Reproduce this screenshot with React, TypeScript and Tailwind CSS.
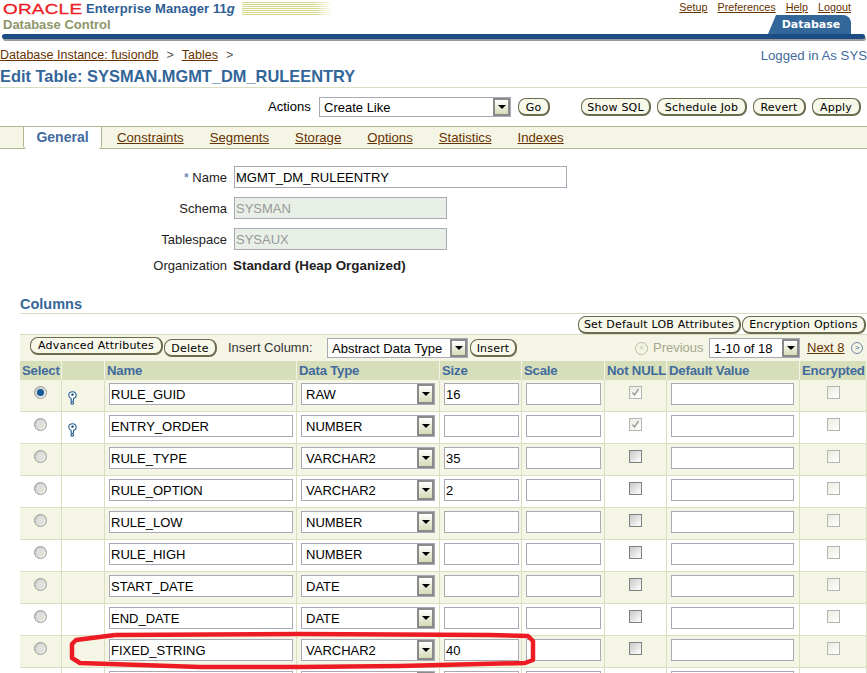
const sans = "font-['Liberation_Sans',Arial,sans-serif]"

const rows = [
  { name: 'RULE_GUID', type: 'RAW', size: '16', key: true, selected: true },
  { name: 'ENTRY_ORDER', type: 'NUMBER', size: '', key: true },
  { name: 'RULE_TYPE', type: 'VARCHAR2', size: '35' },
  { name: 'RULE_OPTION', type: 'VARCHAR2', size: '2' },
  { name: 'RULE_LOW', type: 'NUMBER', size: '' },
  { name: 'RULE_HIGH', type: 'NUMBER', size: '' },
  { name: 'START_DATE', type: 'DATE', size: '' },
  { name: 'END_DATE', type: 'DATE', size: '' },
  { name: 'FIXED_STRING', type: 'VARCHAR2', size: '40' },
  { name: '', type: '', size: '' },
]

function Btn({ children, className }: { children: React.ReactNode; className: string }) {
  return (
    <span className={`inline-flex h-[18px] shrink-0 items-center justify-center rounded-[8px] border border-b-2 border-r-2 border-[#6b6b4f] bg-[#f7f7ea] pt-[1px] font-['DejaVu_Sans',sans-serif] text-[11px] leading-none tracking-[0.2px] whitespace-nowrap text-black ${className}`}>
      {children}
    </span>
  )
}

function Arrow() {
  return (
    <span className="flex h-full w-[17px] shrink-0 items-center justify-center border-2 border-[#8a8a8a] bg-gradient-to-b from-white to-[#d5dcb8]">
      <span className="border-x-[4px] border-t-[4px] border-x-transparent border-t-black" />
    </span>
  )
}

function Select({ value, className, tall }: { value: string; className: string; tall?: boolean }) {
  return (
    <span className={`flex shrink-0 items-stretch border border-[#a9a9b5] bg-white ${className}`}>
      <span className={`flex-1 truncate pl-[4px] text-[13px] text-black ${tall ? 'leading-[21px]' : 'leading-[20px]'}`}>{value}</span>
      <Arrow />
    </span>
  )
}

function Field({ value, className, disabled }: { value?: string; className: string; disabled?: boolean }) {
  return (
    <span
      className={`block truncate border border-[#a9a9b5] pl-[1px] text-[13px] leading-[21px] ${
        disabled ? 'bg-[#e8efe6] text-[#999]' : 'bg-white text-black'
      } ${className}`}
    >
      {value}
    </span>
  )
}

function KeyIcon() {
  return (
    <svg width="9" height="14" viewBox="0 0 9 14" className="mt-[8px]">
      <path d="M4.5 0.8 C2 0.8 0.8 2.4 0.8 4.2 C0.8 5.8 2 7 3.2 7.6 L3.2 13 L5.4 13 L5.4 11.4 L4.4 10.6 L5.6 9.6 L5.4 7.6 C7 7 8.2 5.8 8.2 4.2 C8.2 2.4 7 0.8 4.5 0.8 Z" fill="#fff" stroke="#1f5f8f" strokeWidth="1.1" />
      <circle cx="4.5" cy="3.6" r="1.2" fill="#0b3c66" />
    </svg>
  )
}

function Radio({ on }: { on?: boolean }) {
  return (
    <span className="flex h-[13px] w-[13px] items-center justify-center rounded-full border border-[#9a9a9a] bg-gradient-to-br from-[#c4c4c4] to-[#f4f4f4]">
      <span className={`h-[7px] w-[7px] rounded-full ${on ? 'bg-[#135a96]' : 'bg-[#dfe2d6]'}`} />
    </span>
  )
}

function Check({ on, dark }: { on?: boolean; dark?: boolean }) {
  return (
    <span className={`flex h-[13px] w-[13px] items-center justify-center border bg-gradient-to-br ${dark ? 'border-[#808080] from-[#c8c8c8] to-white' : 'border-[#b4b4b4] from-[#e8ecdc] to-white'}`}>
      {on && (
        <svg width="9" height="9" viewBox="0 0 9 9">
          <path d="M1.5 4.5 L3.5 7 L7.5 1" fill="none" stroke="#a0a0a0" strokeWidth="1.5" />
        </svg>
      )}
    </span>
  )
}

const grid = 'grid grid-cols-[42px_43px_192px_143px_82px_83px_62px_133px_67px]'
const head = 'border-r border-[#f3f4e4] pl-[2px] text-[13.2px] font-bold leading-[19px] tracking-[-0.2px] text-[#426a9e] whitespace-nowrap'
const cell = 'flex h-[31px] items-start border-r border-[#dadfc0] pt-[3px]'
const tick = 'flex h-[31px] items-start justify-center border-r border-[#dadfc0] pt-[6px]'

export default function App() {
  return (
    <div className={`relative h-[673px] w-[867px] overflow-hidden bg-white ${sans}`}>
      {/* top branding */}
      <div className="flex h-[34px] justify-between">
        <div className="pl-[3px]">
          <div className="flex h-[18px] items-start">
            <span className="w-[80px] origin-left scale-x-[1.26] text-[15px] leading-[18px] tracking-[0.2px] text-[#ee1c25] [-webkit-text-stroke:0.3px_#ee1c25]">ORACLE</span>
            <span className="ml-[3px] w-[149px] text-[13px] font-bold leading-[18px] tracking-[0.1px] whitespace-nowrap text-[#2e5d94]">Enterprise Manager 11<i>g</i></span>
            <div className="ml-[7px] flex w-[91px] flex-col gap-[1px] pt-[2px]">
              {[0, 1, 2, 3, 4, 5, 6].map((i) => (
                <div key={i} className="h-[1px] bg-gradient-to-r from-[#d8d88c] via-[#d8d88c] via-[80%] to-white" />
              ))}
            </div>
          </div>
          <div className="text-[13px] font-bold leading-[14px] text-[#8f966a]">Database Control</div>
        </div>
        <div className="flex w-[120px] flex-col items-end pr-[16px]">
          <div className="flex gap-[10px] pt-[1px] text-[10.8px] leading-[13px] whitespace-nowrap text-[#663300] underline">
            <span>Setup</span>
            <span>Preferences</span>
            <span>Help</span>
            <span>Logout</span>
          </div>
          <div className="mt-[1px] flex h-[19px] w-[83px] shrink-0 items-center justify-center rounded-tr-[8px] bg-[#336699] pl-[3px] pt-[1px] font-['DejaVu_Sans',sans-serif] text-[11px] font-bold text-white [clip-path:polygon(8px_0,100%_0,100%_100%,0_100%)]">
            Database
          </div>
        </div>
      </div>
      <div className="mx-[2px] h-[5px] rounded-full bg-[#1c4c84] shadow-[1px_2px_0_#9a9a9a]" />

      {/* breadcrumb */}
      <div className="mt-[8px] flex h-[17px] items-center justify-between text-[12.5px] leading-none text-[#555]">
        <div className="flex items-center">
          <span className="text-[#663300] underline">Database Instance: fusiondb</span>
          <span className="ml-[8px]">&gt;</span>
          <span className="ml-[8px] text-[#663300] underline">Tables</span>
          <span className="ml-[8px]">&gt;</span>
        </div>
        <span className="text-[13.2px] text-[#426a9e]">Logged in As SYS</span>
      </div>
      <div className="h-[24px] border-b border-[#d9dcc0] pt-[2px] text-[16.4px] font-bold leading-[21px] text-[#336699]">Edit Table: SYSMAN.MGMT_DM_RULEENTRY</div>

      {/* actions */}
      <div className="mt-[9px] flex h-[20px] items-center pl-[268px] text-[13px]">
        <span className="w-[51px] shrink-0">Actions</span>
        <Select value="Create Like" className="h-[20px] w-[192px]" />
        <Btn className="ml-[7px] w-[32px]">Go</Btn>
        <Btn className="ml-[31px] w-[70px]">Show SQL</Btn>
        <Btn className="ml-[6px] w-[90px]">Schedule Job</Btn>
        <Btn className="ml-[6px] w-[53px]">Revert</Btn>
        <Btn className="ml-[6px] w-[49px]">Apply</Btn>
      </div>

      {/* sub tabs */}
      <div className="mt-[9px] flex h-[23px] border-y border-[#b3b68e] bg-[#f5f5e6] pl-[23px] text-[13.2px] text-[#663300]">
        <span className="relative -mb-[1px] flex w-[79px] items-center justify-center rounded-b-[4px] border-x border-[#b3b68e] bg-white pb-[1px] text-[14px] font-bold text-[#426a9e]">General</span>
        <div className="flex items-center pl-[15px] underline [&>span]:mr-[26px]">
          <span>Constraints</span>
          <span>Segments</span>
          <span>Storage</span>
          <span>Options</span>
          <span>Statistics</span>
          <span>Indexes</span>
        </div>
      </div>

      {/* form */}
      <div className="mt-[17px] grid grid-cols-[227px_auto] items-center justify-start gap-x-[7px] text-[13px] text-[#222]">
        <span className="h-[22px] text-right leading-[23px]"><span className="text-[#426a9e]">*</span> Name</span>
        <Field value="MGMT_DM_RULEENTRY" className="h-[22px] w-[333px]" />
        <span className="mt-[9px] h-[22px] text-right leading-[23px]">Schema</span>
        <Field value="SYSMAN" disabled className="mt-[9px] h-[22px] w-[213px]" />
        <span className="mt-[9px] h-[22px] text-right leading-[23px]">Tablespace</span>
        <Field value="SYSAUX" disabled className="mt-[9px] h-[22px] w-[213px]" />
        <span className="mt-[7px] text-right leading-[18px]">Organization</span>
        <span className="mt-[7px] -ml-[1px] text-[13.4px] font-bold leading-[18px]">Standard (Heap Organized)</span>
      </div>

      {/* columns */}
      <div className="ml-[20px] mt-[19px] h-[20px] border-b border-[#d9dcc0] pt-[1px] text-[14.5px] font-bold leading-[18px] text-[#336699]">Columns</div>
      <div className="ml-[20px] flex h-[20px] items-center justify-end pr-[1px] pt-[1px]">
        <Btn className="w-[163px]">Set Default LOB Attributes</Btn>
        <Btn className="ml-[1px] w-[124px]">Encryption Options</Btn>
      </div>

      <div className="ml-[20px] flex h-[27px] items-center border-t border-[#d9dcc0] bg-[#f5f5e6] pl-[10px] text-[13px]">
        <Btn className="-mt-[5px] w-[133px]">Advanced Attributes</Btn>
        <Btn className="ml-[1px] w-[53px]">Delete</Btn>
        <span className="ml-[11px] w-[99px] shrink-0 text-[#333]">Insert Column:</span>
        <Select value="Abstract Data Type" className="h-[20px] w-[141px]" />
        <Btn className="ml-[2px] w-[47px]">Insert</Btn>
        <span className="ml-[118px] flex h-[13px] w-[13px] shrink-0 items-center justify-center rounded-full border border-[#b9bca0] text-[8px] leading-none text-[#b9bca0]">&lt;</span>
        <span className="ml-[5px] w-[56px] shrink-0 text-[#a7a78f]">Previous</span>
        <Select value="1-10 of 18" className="h-[20px] w-[91px]" />
        <span className="ml-[7px] w-[38px] shrink-0 whitespace-nowrap text-[#663300] underline">Next 8</span>
        <span className="ml-[6px] flex h-[12px] w-[12px] shrink-0 items-center justify-center rounded-full border border-[#6d86a8] text-[8px] leading-none text-[#336699]">&gt;</span>
      </div>

      <div className={`ml-[20px] ${grid} bg-[#d6dfba]`}>
        {['Select', '', 'Name', 'Data Type', 'Size', 'Scale', 'Not NULL', 'Default Value', 'Encrypted'].map((h, i) => (
          <div key={i} className={head}>{h}</div>
        ))}
      </div>

      {rows.map((r, i) => (
        <div key={i} className={`ml-[20px] ${grid} border-b border-[#dadfc0] ${i % 2 === 0 ? 'bg-[#f5f5e6]' : 'bg-white'}`}>
          <div className={tick}><Radio on={r.selected} /></div>
          <div className={`${cell} pl-[6px]`}>{r.key && <KeyIcon />}</div>
          <div className={`${cell} pl-[4px]`}><Field value={r.name} className="h-[22px] w-[184px]" /></div>
          <div className={`${cell} pl-[4px]`}><Select tall value={r.type} className="h-[22px] w-[134px]" /></div>
          <div className={`${cell} pl-[4px]`}><Field value={r.size} className="h-[22px] w-[75px]" /></div>
          <div className={`${cell} pl-[4px]`}><Field className="h-[22px] w-[75px]" /></div>
          <div className={tick}><Check on={!!r.key} dark={!r.key} /></div>
          <div className={`${cell} pl-[4px]`}><Field className="h-[22px] w-[123px]" /></div>
          <div className={tick}><Check /></div>
        </div>
      ))}

      {/* hand-drawn annotation */}
      <svg className="absolute left-0 top-0" width="867" height="673" fill="none">
        <path
          d="M115 635 L76 640 L72 644 L72 658 L80 663 L200 667 L300 667 L400 666 L525 663 L533 660 L533 641 L528 636 L490 635 L300 634 L115 635"
          stroke="#ed1c24"
          strokeWidth="4.5"
          strokeLinejoin="round"
        />
      </svg>
    </div>
  )
}
